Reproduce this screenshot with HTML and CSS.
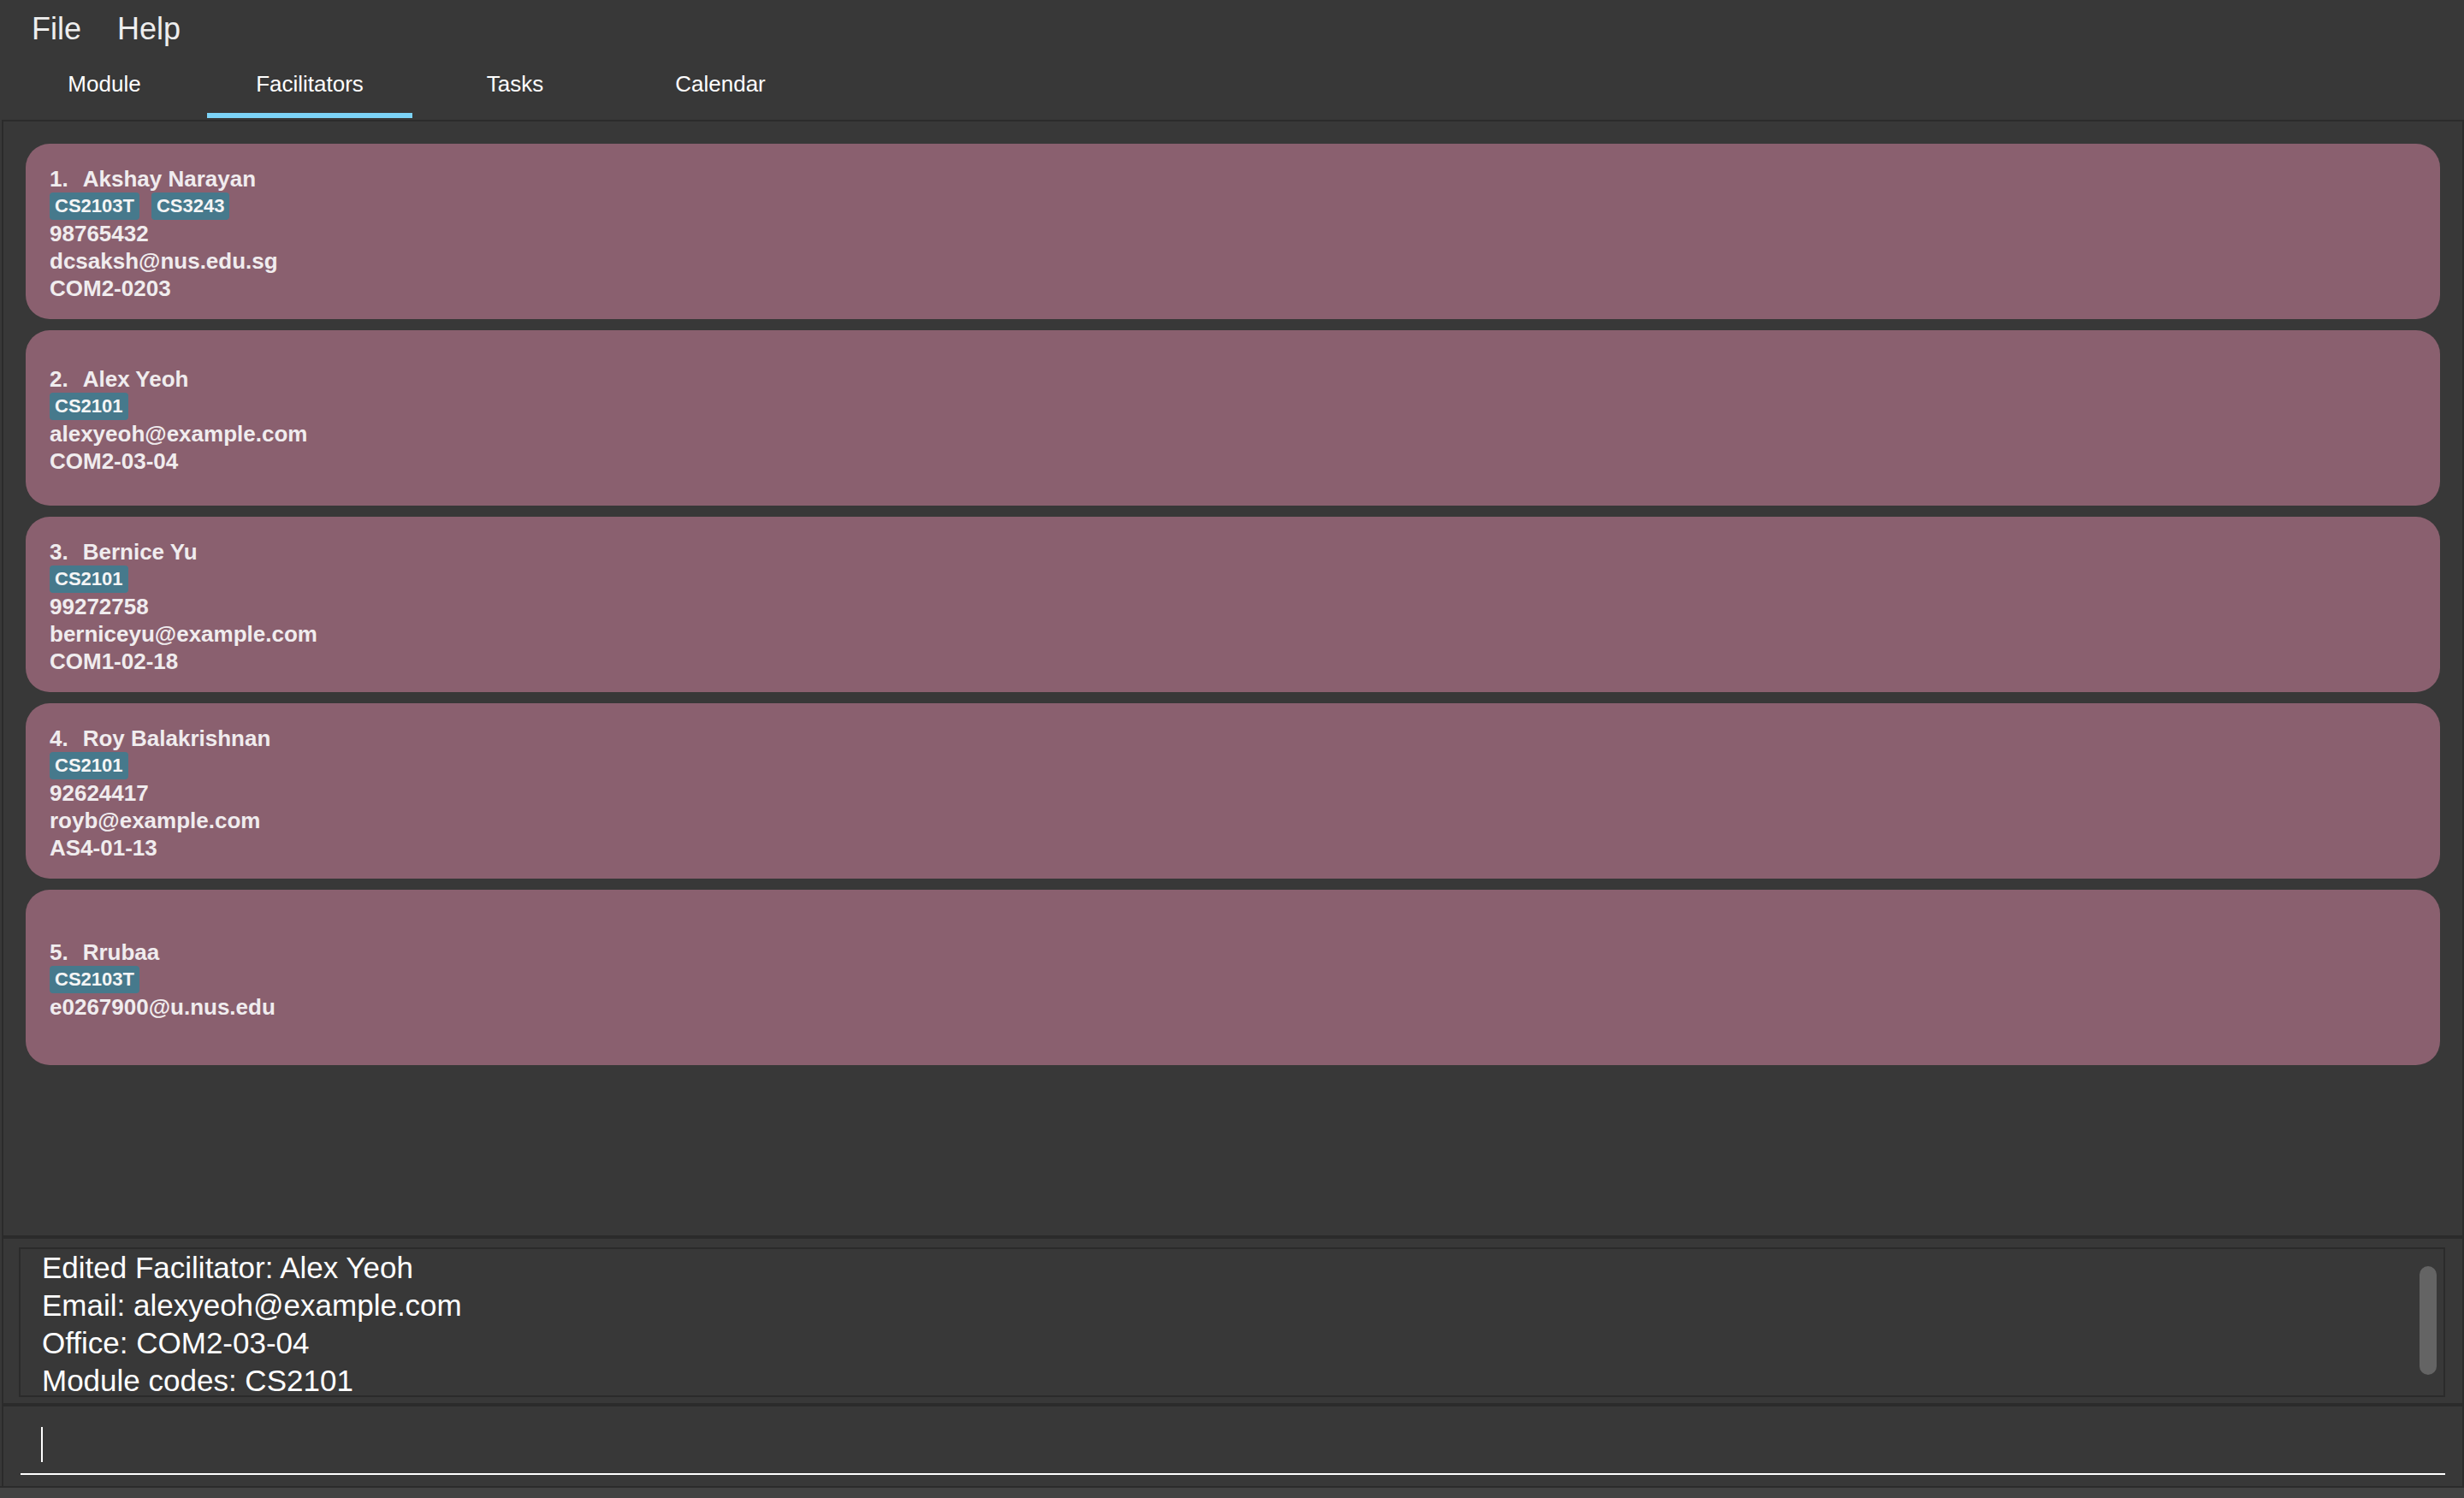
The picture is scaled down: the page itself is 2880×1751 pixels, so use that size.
FILE: index.html
```html
<!DOCTYPE html>
<html lang="en">
<head>
    <meta charset="UTF-8">
    <title>Facilitators</title>
    <link rel="stylesheet" href="styles.css">
</head>
<body>
    <div class="menubar">
        <span class="menu-item">File</span>
        <span class="menu-item">Help</span>
    </div>

    <div class="tab-header">
        <div class="tab">Module</div>
        <div class="tab active">Facilitators</div>
        <div class="tab">Tasks</div>
        <div class="tab">Calendar</div>
    </div>

    <div class="main">
        <div class="list-panel">
            <div class="card">
                <div class="name"><span class="id">1.</span>Akshay Narayan</div>
                <div class="tags"><span class="tag">CS2103T</span><span class="tag">CS3243</span></div>
                <div>98765432</div>
                <div>dcsaksh@nus.edu.sg</div>
                <div>COM2-0203</div>
            </div>
            <div class="card">
                <div class="name"><span class="id">2.</span>Alex Yeoh</div>
                <div class="tags"><span class="tag">CS2101</span></div>
                <div>alexyeoh@example.com</div>
                <div>COM2-03-04</div>
            </div>
            <div class="card">
                <div class="name"><span class="id">3.</span>Bernice Yu</div>
                <div class="tags"><span class="tag">CS2101</span></div>
                <div>99272758</div>
                <div>berniceyu@example.com</div>
                <div>COM1-02-18</div>
            </div>
            <div class="card">
                <div class="name"><span class="id">4.</span>Roy Balakrishnan</div>
                <div class="tags"><span class="tag">CS2101</span></div>
                <div>92624417</div>
                <div>royb@example.com</div>
                <div>AS4-01-13</div>
            </div>
            <div class="card">
                <div class="name"><span class="id">5.</span>Rrubaa</div>
                <div class="tags"><span class="tag">CS2103T</span></div>
                <div>e0267900@u.nus.edu</div>
            </div>
        </div>

        <div class="result-panel">
            <div class="result-box">
                <div>Edited Facilitator: Alex Yeoh</div>
                <div>Email: alexyeoh@example.com</div>
                <div>Office: COM2-03-04</div>
                <div>Module codes: CS2101</div>
                <div class="scroll-thumb"></div>
            </div>
        </div>

        <div class="command-panel">
            <div class="command-box">
                <div class="caret"></div>
            </div>
        </div>
    </div>

    <div class="status-bar"></div>
</body>
</html>
```

FILE: styles.css
```css
html, body {
    margin: 0;
    height: 100%;
}
body {
    font-family: "Liberation Sans", Arial, sans-serif;
    background-color: #383838;
    color: #eeeeee;
    overflow: hidden;
    display: flex;
    flex-direction: column;
}
.menubar {
    display: flex;
    height: 62px;
    flex-shrink: 0;
    padding: 13px 0 0 16px;
    box-sizing: border-box;
}
.menu-item {
    font-size: 36px;
    line-height: 42px;
    padding: 0 21px;
    color: #eeeeee;
}
.tab-header {
    display: flex;
    height: 78px;
    flex-shrink: 0;
    padding-left: 2px;
}
.tab {
    width: 240px;
    height: 76px;
    box-sizing: border-box;
    padding-top: 2px;
    line-height: 68px;
    text-align: center;
    font-size: 26px;
    color: #ffffff;
    border-bottom: 6px solid transparent;
}
.tab.active {
    border-bottom-color: #7cd3f7;
}
.main {
    flex: 1;
    min-height: 0;
    display: flex;
    flex-direction: column;
    margin-left: 2px;
    border-left: 2px solid #2b2b2b;
    border-right: 2px solid #2b2b2b;
}
.list-panel {
    height: 1308px;
    flex-shrink: 0;
    box-sizing: border-box;
    border-top: 2px solid #2b2b2b;
    border-bottom: 4px solid #2b2b2b;
    padding: 26px 26px 0 26px;
    display: flex;
    flex-direction: column;
    gap: 13px;
}
.card {
    height: 205px;
    flex-shrink: 0;
    box-sizing: border-box;
    background-color: #8a606f;
    border-radius: 28px;
    padding: 4px 0 0 28px;
    display: flex;
    flex-direction: column;
    justify-content: center;
    font-size: 26px;
    font-weight: bold;
    line-height: 32px;
    color: #f0ecee;
}
.id {
    margin-right: 17px;
}
.tags {
    display: flex;
    gap: 14px;
    height: 32px;
}
.tag {
    background-color: #46798c;
    color: #f5f5f5;
    font-size: 22px;
    line-height: 32px;
    padding: 0 6px;
    border-radius: 4px;
}
.result-panel {
    height: 196px;
    flex-shrink: 0;
    box-sizing: border-box;
    padding: 10px 20px 0 18px;
    border-bottom: 4px solid #2b2b2b;
}
.result-box {
    position: relative;
    height: 175px;
    box-sizing: border-box;
    border: 2px solid #2b2b2b;
    padding-left: 25px;
    font-size: 35px;
    line-height: 44px;
    color: #ffffff;
    overflow: hidden;
}
.scroll-thumb {
    position: absolute;
    top: 20px;
    right: 8px;
    width: 20px;
    height: 127px;
    border-radius: 10px;
    background-color: #646464;
}
.command-panel {
    flex: 1;
    padding: 0 20px;
}
.command-box {
    height: 80px;
    box-sizing: border-box;
    border-bottom: 2px solid #ffffff;
    padding: 24px 0 0 24px;
}
.caret {
    width: 2px;
    height: 41px;
    background-color: #ffffff;
}
.status-bar {
    height: 12px;
    flex-shrink: 0;
    background-color: #434343;
    border-top: 2px solid #2b2b2b;
}
```
